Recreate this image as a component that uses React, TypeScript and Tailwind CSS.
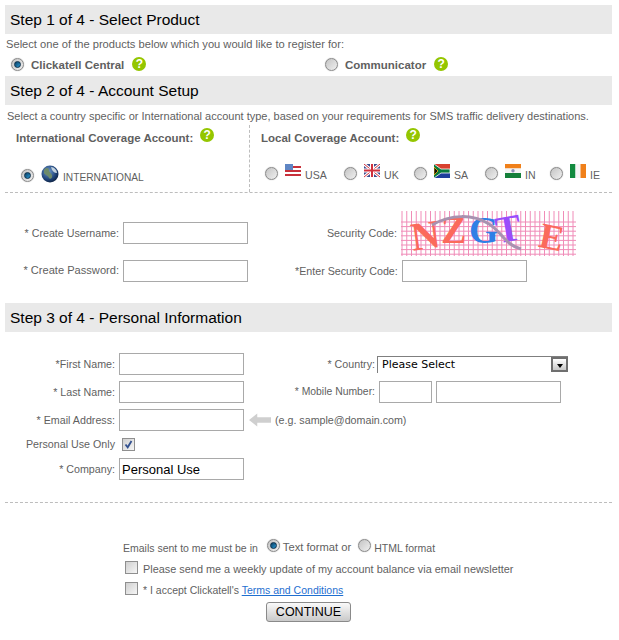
import type { ReactNode } from 'react';

const Heading = ({ children }: { children: ReactNode }) => (
  <div className="flex h-[29px] w-[607px] items-center bg-[#e9e9e9] pl-[5px] text-[15.5px] text-black">{children}</div>
);

const Help = () => (
  <span className="inline-flex h-[14px] w-[14px] items-center justify-center rounded-full bg-[#94c600] text-[12px] font-bold leading-none text-white">
    ?
  </span>
);

const Radio = ({ on = false }: { on?: boolean }) => (
  <span className="flex h-[13px] w-[13px] shrink-0 items-center justify-center rounded-full border border-[#8b8b8b] bg-gradient-to-br from-[#c4c4c4] to-[#f0f0f0] shadow-[0_0_1px_#999]">
    {on && <span className="h-[7px] w-[7px] rounded-full border border-[#0b2f4a] bg-gradient-to-br from-[#0b3f63] to-[#2a9ad6]" />}
  </span>
);

const Box = ({ on = false }: { on?: boolean }) => (
  <span className="flex h-[13px] w-[13px] shrink-0 items-center justify-center border border-[#8f8f8f] bg-gradient-to-br from-[#d0d0d0] to-[#f6f6f6]">
    {on && (
      <svg viewBox="0 0 11 11" className="h-[11px] w-[11px]">
        <path d="M2.5 5.5 L4.7 8.3 L8.5 2" fill="none" stroke="#33518f" strokeWidth="1.8" />
      </svg>
    )}
  </span>
);

const Input = ({ w, value }: { w: string; value?: string }) => (
  <div className={`flex h-[22px] ${w} items-center border border-[#a9a9a9] bg-white pl-[2px] text-[13px] text-black`}>{value}</div>
);

const Field = ({ label, lw, children }: { label: string; lw: string; children: ReactNode }) => (
  <div className="flex items-center">
    <span className={`${lw} shrink-0 text-right`}>{label}</span>
    {children}
  </div>
);

const Globe = () => (
  <svg viewBox="0 0 18 18" className="h-[18px] w-[18px]">
    <defs>
      <radialGradient id="globe" cx="40%" cy="35%" r="70%">
        <stop offset="0%" stopColor="#6f9bd0" />
        <stop offset="70%" stopColor="#1c3f73" />
        <stop offset="100%" stopColor="#0d1f3c" />
      </radialGradient>
    </defs>
    <circle cx="9" cy="9" r="8.5" fill="url(#globe)" />
    <path d="M3 5 C5 2 8 3 8 5 C8 7 10 8 11 10 C12 13 9 15 8 13 C7 10 4 10 3 8 Z" fill="#6d8a6a" />
    <path d="M10 2 C13 2 16 5 16 8 C13 8 11 6 10 2 Z" fill="#c3d2de" />
  </svg>
);

const Flag = ({ code }: { code: string }) => {
  if (code === 'USA')
    return (
      <svg viewBox="0 0 16 14" className="h-[14px] w-[16px]">
        <rect width="16" height="12" fill="#fff" />
        <rect y="2" width="16" height="2" fill="#c8303a" />
        <rect y="6" width="16" height="2" fill="#c8303a" />
        <rect y="10" width="16" height="2" fill="#c8303a" />
        <rect width="8" height="6" fill="#5f86c4" />
      </svg>
    );
  if (code === 'UK')
    return (
      <svg viewBox="0 0 16 14" className="h-[14px] w-[16px]">
        <rect width="16" height="13" fill="#3a4a8c" />
        <path d="M0 0 L16 13 M16 0 L0 13" stroke="#fff" strokeWidth="3" />
        <path d="M0 0 L16 13 M16 0 L0 13" stroke="#d02f3c" strokeWidth="1" />
        <path d="M8 0 V13 M0 6.5 H16" stroke="#fff" strokeWidth="4" />
        <path d="M8 0 V13 M0 6.5 H16" stroke="#d02f3c" strokeWidth="2" />
      </svg>
    );
  if (code === 'SA')
    return (
      <svg viewBox="0 0 16 14" className="h-[14px] w-[16px]">
        <rect width="16" height="7" fill="#d8412f" />
        <rect y="7" width="16" height="7" fill="#1f3f9c" />
        <path d="M0 0 L7 7 L0 14 Z" fill="#111" />
        <path d="M0 0 L7 5 H16 V9 H7 L0 14" fill="#0a7a3e" stroke="#fff" strokeWidth="0.8" />
        <path d="M0 3 L4 7 L0 11 Z" fill="#111" stroke="#f2b90f" strokeWidth="0.8" />
      </svg>
    );
  if (code === 'IN')
    return (
      <svg viewBox="0 0 16 14" className="h-[14px] w-[16px]">
        <rect width="16" height="4.5" fill="#f0801a" />
        <rect y="4.5" width="16" height="4.5" fill="#f4f4f4" />
        <rect y="9" width="16" height="5" fill="#15803a" />
        <circle cx="8" cy="6.8" r="1.7" fill="#8d90b5" />
      </svg>
    );
  return (
    <svg viewBox="0 0 16 14" className="h-[14px] w-[16px]">
      <rect width="5.5" height="14" fill="#118a3e" />
      <rect x="5.5" width="5" height="14" fill="#f5f5f5" />
      <rect x="10.5" width="5.5" height="14" fill="#f0801a" />
    </svg>
  );
};

const Local = ({ code, gap }: { code: string; gap: string }) => (
  <div className={`flex items-center ${gap}`}>
    <Radio />
    <span className="ml-[7px] mb-[5px]">
      <Flag code={code} />
    </span>
    <span className="ml-[4px] mt-[3px] text-[10.6px]">{code}</span>
  </div>
);

const Captcha = () => (
  <svg viewBox="0 0 175 45" className="ml-[4px] h-[45px] w-[175px] overflow-visible">
    {Array.from({ length: 37 }, (_, i) => (
      <line key={i} x1={i * 4.75 + 1} y1="0" x2={i * 4.75 + 1} y2="45" stroke="#f08cb8" strokeWidth="1" />
    ))}
    {Array.from({ length: 8 }, (_, i) => (
      <line key={i} x1="0" y1={11 + i * 4.6} x2="175" y2={11 + i * 4.6} stroke="#f08cb8" strokeWidth="1" />
    ))}
    <g fontFamily="'Liberation Serif', serif" fontWeight="bold">
      <text x="10" y="38" fontSize="40" fill="#fb6a5c" transform="rotate(-8 24 25)">N</text>
      <text x="40" y="32" fontSize="38" fill="#fb6a5c">Z</text>
      <text x="68" y="32" fontSize="38" fill="#2f7fe6">G</text>
      <text x="95" y="30" fontSize="38" fill="#9a4dfb" transform="rotate(-10 110 20)">T</text>
      <text x="139" y="38" fontSize="36" fill="#fb6a5c" transform="rotate(12 150 25)">E</text>
    </g>
    <path d="M31 14 C50 3 72 3 88 13 C100 20 104 34 120 38" fill="none" stroke="#a892b0" strokeWidth="3" />
  </svg>
);

export default function App() {
  return (
    <div className="h-[640px] w-[619px] overflow-hidden bg-white pl-[5px] pt-[5px] font-['Liberation_Sans',Arial,sans-serif] text-[11px] leading-none text-[#5f5f5f]">
      <Heading>Step 1 of 4 - Select Product</Heading>
      <div className="ml-px flex h-[20px] items-center pt-[2px] text-[11.15px]">Select one of the products below which you would like to register for:</div>
      <div className="flex h-[22px] items-center pt-[2px] text-[11.5px] font-bold">
        <div className="ml-[6px] flex w-[314px] items-center">
          <span className="-mt-[4px]"><Radio on /></span>
          <span className="ml-[7px]">Clickatell Central</span>
          <span className="-mt-[5px] ml-[8px]"><Help /></span>
        </div>
        <span className="-mt-[4px]"><Radio /></span>
        <span className="ml-[7px]">Communicator</span>
        <span className="-mt-[5px] ml-[8px]"><Help /></span>
      </div>

      <Heading>Step 2 of 4 - Account Setup</Heading>
      <div className="ml-[2px] flex h-[20px] items-center pt-[2px]">
        Select a country specific or International account type, based on your requirements for SMS traffic delivery destinations.
      </div>
      <div className="flex h-[68px] w-[607px] border-b border-dashed border-[#bdbdbd]">
        <div className="w-[245px] shrink-0 border-r border-dashed border-[#bdbdbd] pl-[11px] pt-[8px]">
          <div className="flex h-[12px] items-center text-[11.5px] font-bold">
            International Coverage Account:
            <span className="-mt-[9px] ml-[7px]"><Help /></span>
          </div>
          <div className="ml-[5px] mt-[20px] flex items-center">
            <Radio on />
            <span className="mb-[3px] ml-[7px]"><Globe /></span>
            <span className="ml-[4px] mt-[6px] text-[10.2px]">INTERNATIONAL</span>
          </div>
        </div>
        <div className="pl-[11px] pt-[8px]">
          <div className="flex h-[12px] items-center text-[11.5px] font-bold">
            Local Coverage Account:
            <span className="-mt-[9px] ml-[7px]"><Help /></span>
          </div>
          <div className="ml-[4px] mt-[19px] flex items-center">
            <Local code="USA" gap="w-[79px]" />
            <Local code="UK" gap="w-[70px]" />
            <Local code="SA" gap="w-[71px]" />
            <Local code="IN" gap="w-[65px]" />
            <Local code="IE" gap="w-[50px]" />
          </div>
        </div>
      </div>

      <div className="text-[10.7px]">
        <div className="mt-[29px] flex h-[22px] items-center">
          <div className="flex w-[290px] items-center">
            <Field label="* Create Username:" lw="w-[114px]">
              <span className="ml-[4px]"><Input w="w-[125px]" /></span>
            </Field>
          </div>
          <span className="w-[102px] text-right">Security Code:</span>
          <Captcha />
        </div>
        <div className="mt-[16px] flex h-[22px] items-center">
          <div className="flex w-[290px] items-center">
            <Field label="* Create Password:" lw="w-[114px] text-[11.1px]">
              <span className="ml-[4px]"><Input w="w-[125px]" /></span>
            </Field>
          </div>
          <span className="w-[102px] whitespace-nowrap text-right">*Enter Security Code:</span>
          <span className="ml-[5px]"><Input w="w-[125px]" /></span>
        </div>

        <div className="mt-[21px]"><Heading>Step 3 of 4 - Personal Information</Heading></div>

        <div className="mt-[21px] flex">
          <div className="flex w-[244px] flex-col">
            <Field label="*First Name:" lw="w-[110px]"><span className="ml-[4px]"><Input w="w-[125px]" /></span></Field>
            <div className="mt-[6px]">
              <Field label="* Last Name:" lw="w-[110px]"><span className="ml-[4px]"><Input w="w-[125px]" /></span></Field>
            </div>
            <div className="mt-[6px]">
              <Field label="* Email Address:" lw="w-[110px]"><span className="ml-[4px]"><Input w="w-[125px]" /></span></Field>
            </div>
            <div className="mt-[7px] flex h-[13px] items-center">
              <span className="w-[110px] text-right">Personal Use Only</span>
              <span className="ml-[7px]"><Box on /></span>
            </div>
            <div className="mt-[7px]">
              <Field label="* Company:" lw="w-[110px]"><span className="ml-[4px]"><Input w="w-[125px]" value="Personal Use" /></span></Field>
            </div>
          </div>
          <div className="flex flex-col">
            <div className="flex h-[22px] items-center">
              <span className="w-[126px] text-right">* Country:</span>
              <div className="ml-[2px] flex h-[17px] w-[191px] items-center justify-between border-t border-l border-[#7f7f7f] bg-white pl-[4px] font-['DejaVu_Sans',sans-serif] text-[11px] text-black">
                Please Select
                <span className="flex h-[15px] w-[17px] items-center justify-center border-2 border-[#6f6f6f] bg-gradient-to-b from-white to-[#c8c8c8]">
                  <span className="mt-[2px] h-0 w-0 border-x-[3.5px] border-t-[4px] border-x-transparent border-t-black" />
                </span>
              </div>
            </div>
            <div className="mt-[6px] flex h-[22px] items-center">
              <span className="w-[126px] text-right text-[10.4px]">* Mobile Number:</span>
              <span className="ml-[4px]"><Input w="w-[53px]" /></span>
              <span className="ml-[4px]"><Input w="w-[125px]" /></span>
            </div>
            <div className="mt-[6px] flex h-[22px] items-center">
              <svg viewBox="0 0 24 14" className="h-[14px] w-[22px]">
                <path d="M0 7 L9 0 V4 H24 V10 H9 V14 Z" fill="#cfcfcf" />
              </svg>
              <span className="ml-[4px]">(e.g. sample@domain.com)</span>
            </div>
          </div>
        </div>
      </div>

      <div className="mt-[22px] w-[607px] border-t border-dashed border-[#bdbdbd]" />

      <div className="ml-[118px] mt-[38px] flex h-[14px] items-center text-[10.5px]">
        Emails sent to me must be in
        <span className="-mt-[5px] ml-[9px]"><Radio on /></span>
        <span className="ml-[3px] text-[11.2px]">Text format or</span>
        <span className="-mt-[5px] ml-[7px]"><Radio /></span>
        <span className="ml-[3px]">HTML format</span>
      </div>
      <div className="ml-[120px] mt-[7px] flex h-[15px] items-center text-[10.9px]">
        <span className="-mt-[5px]"><Box /></span>
        <span className="ml-[5px]">Please send me a weekly update of my account balance via email newsletter</span>
      </div>
      <div className="ml-[120px] mt-[6px] flex h-[15px] items-center text-[10.5px]">
        <span className="-mt-[5px]"><Box /></span>
        <span className="ml-[5px]">* I accept Clickatell's <a className="text-[#1f6fd0] underline">Terms and Conditions</a></span>
      </div>
      <div className="ml-[261px] mt-[4px] flex h-[20px] w-[85px] items-center justify-center rounded-[3px] border border-[#8a8a8a] bg-gradient-to-b from-[#fafafa] to-[#c9c9c9] text-[12.5px] text-black">
        CONTINUE
      </div>
    </div>
  );
}
